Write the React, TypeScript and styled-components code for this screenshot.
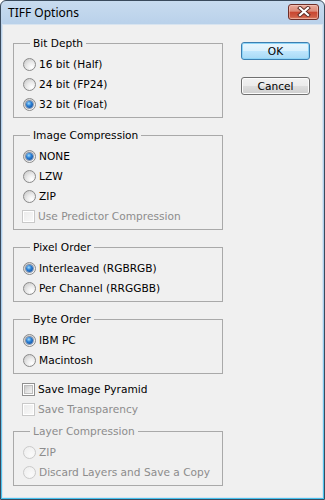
import styled, { createGlobalStyle } from "styled-components";

const Global = createGlobalStyle`
  html, body { margin: 0; padding: 0; background: #ffffff; }
  body { width: 325px; height: 500px; overflow: hidden; }
`;

const Window = styled.div`
    box-sizing: border-box;
    width: 325px;
    height: 500px;
    border: 1px solid #3a4a5c;
    border-radius: 6px 6px 0 0;
    background: linear-gradient(to bottom, #c8dbef 0px, #b9d1ea 24px, #a9cdec 60%, #46c2ee 100%);
    display: flex;
    flex-direction: column;
    font-family: "DejaVu Sans", Verdana, sans-serif;
    font-size: 10.6px;
    color: #000;
`;

const TitleBar = styled.div`
    height: 24px;
    display: flex;
    align-items: center;
    justify-content: space-between;
    padding: 0 5px 0 7px;
    flex-shrink: 0;
`;

const Title = styled.span`
    font-family: "Noto Sans", "Open Sans", sans-serif;
    font-size: 12px;
    color: #000;
    margin-top: -1px;
`;

const CloseButton = styled.div`
    width: 31px;
    height: 16px;
    box-sizing: border-box;
    margin-top: -3px;
    border: 1px solid #6e2e28;
    border-radius: 3px;
    background: linear-gradient(to bottom, #e9a99b 0%, #dc8a78 45%, #c9452f 50%, #cf5d45 85%, #e08a6f 100%);
    box-shadow: inset 0 0 0 1px rgba(255, 220, 210, 0.45);
    display: flex;
    align-items: center;
    justify-content: center;
`;

const Client = styled.div`
    flex: 1;
    margin: 0 2px 2px 2px;
    background: #f0f0f0;
    display: flex;
    padding: 11px 0 0 10px;
    box-shadow: 0 0 0 1px #d8e4f0;
`;

const Main = styled.div`
    width: 210px;
    display: flex;
    flex-direction: column;
`;

const Side = styled.div`
    display: flex;
    flex-direction: column;
    gap: 17px;
    margin: 6px 0 0 18px;
`;

const Button = styled.button<{ $default?: boolean }>`
    width: 69px;
    height: 18px;
    padding: 0;
    border-radius: 3px;
    font-family: "DejaVu Sans", Verdana, sans-serif;
    font-size: 10.6px;
    color: #000;
    border: 1px solid ${(p) => (p.$default ? "#3c7fb1" : "#707070")};
    background: ${(p) =>
        p.$default
            ? "linear-gradient(to bottom, #eaf6fd 0%, #d9f0fc 50%, #bee6fd 51%, #a7d9f5 100%)"
            : "linear-gradient(to bottom, #f2f2f2 0%, #ebebeb 50%, #dddddd 51%, #cfcfcf 100%)"};
    box-shadow: inset 0 0 0 1px ${(p) => (p.$default ? "#8ed5f7" : "#fcfcfc")};
`;

const Group = styled.fieldset<{ $disabled?: boolean }>`
    margin: 0 0 10px 0;
    padding: 0 9px 3px 9px;
    border: 1px solid #a9a9a9;
    border-radius: 0;
    min-width: 0;
    color: ${(p) => (p.$disabled ? "#8c8c8c" : "#000")};
`;

const Legend = styled.legend`
    margin-left: 7px;
    padding: 0 3px;
    line-height: 15px;
`;

const List = styled.div`
    display: flex;
    flex-direction: column;
    padding-top: 3px;
`;

const Row = styled.label<{ $disabled?: boolean; $indent?: number }>`
    height: 20px;
    display: flex;
    align-items: center;
    gap: 3px;
    margin-left: ${(p) => p.$indent ?? 0}px;
    color: ${(p) => (p.$disabled ? "#8c8c8c" : "#000")};
    white-space: nowrap;
`;

const Radio = styled.span<{ $checked?: boolean; $disabled?: boolean }>`
    width: 13px;
    height: 13px;
    box-sizing: border-box;
    border-radius: 50%;
    flex-shrink: 0;
    border: 1px solid ${(p) => (p.$disabled ? "#cacaca" : "#8a8a8a")};
    background: ${(p) =>
        p.$disabled
            ? "radial-gradient(circle at 65% 70%, #fafafa 0%, #ededed 100%)"
            : "radial-gradient(circle at 70% 75%, #ffffff 0%, #ececec 40%, #c2c2c2 100%)"};
    display: flex;
    align-items: center;
    justify-content: center;
    &::after {
        content: "";
        display: ${(p) => (p.$checked ? "block" : "none")};
        width: 7px;
        height: 7px;
        border-radius: 50%;
        background: radial-gradient(circle at 40% 35%, #9fdcff 0%, #2a7fd4 40%, #0b3f8c 100%);
        box-shadow: 0 0 0 1px rgba(20, 50, 100, 0.45);
    }
`;

const Check = styled.span<{ $disabled?: boolean }>`
    width: 13px;
    height: 13px;
    box-sizing: border-box;
    flex-shrink: 0;
    border: 1px solid ${(p) => (p.$disabled ? "#c9c9c9" : "#8f8f8f")};
    background: #fff;
    padding: 1px;
    &::after {
        content: "";
        display: block;
        width: 100%;
        height: 100%;
        background: ${(p) =>
            p.$disabled
                ? "linear-gradient(135deg, #ececec 0%, #f8f8f8 100%)"
                : "linear-gradient(135deg, #c9c9c9 0%, #e6e6e6 60%, #f2f2f2 100%)"};
        box-sizing: border-box;
        border: ${(p) => (p.$disabled ? "0" : "1px solid #bdbdbd")};
    }
`;

const Checks = styled.div`
    display: flex;
    flex-direction: column;
    margin: -5px 0 5px 0;
`;

type Opt = { label: string; checked?: boolean; disabled?: boolean; box?: boolean };

function OptionGroup({ title, options, disabled }: { title: string; options: Opt[]; disabled?: boolean }) {
    return (
        <Group $disabled={disabled}>
            <Legend>{title}</Legend>
            <List>
                {options.map((o) =>
                    o.box ? (
                        <Row key={o.label} $disabled={o.disabled} $indent={-1}>
                            <Check $disabled={o.disabled} />
                            {o.label}
                        </Row>
                    ) : (
                        <Row key={o.label} $disabled={o.disabled}>
                            <Radio $checked={o.checked} $disabled={o.disabled} />
                            {o.label}
                        </Row>
                    )
                )}
            </List>
        </Group>
    );
}

export default function App() {
    return (
        <>
            <Global />
            <Window>
                <TitleBar>
                    <Title>TIFF Options</Title>
                    <CloseButton>
                        <svg width="14" height="11" viewBox="0 0 14 11">
                            <path d="M3 2 L11 9 M11 2 L3 9" stroke="#5a2a24" strokeWidth="4" strokeLinecap="square" />
                            <path d="M3 2 L11 9 M11 2 L3 9" stroke="#ffffff" strokeWidth="2.2" strokeLinecap="square" />
                        </svg>
                    </CloseButton>
                </TitleBar>
                <Client>
                    <Main>
                        <OptionGroup
                            title="Bit Depth"
                            options={[
                                { label: "16 bit (Half)" },
                                { label: "24 bit (FP24)" },
                                { label: "32 bit (Float)", checked: true },
                            ]}
                        />
                        <OptionGroup
                            title="Image Compression"
                            options={[
                                { label: "NONE", checked: true },
                                { label: "LZW" },
                                { label: "ZIP" },
                                { label: "Use Predictor Compression", disabled: true, box: true },
                            ]}
                        />
                        <OptionGroup
                            title="Pixel Order"
                            options={[
                                { label: "Interleaved (RGBRGB)", checked: true },
                                { label: "Per Channel (RRGGBB)" },
                            ]}
                        />
                        <OptionGroup
                            title="Byte Order"
                            options={[{ label: "IBM PC", checked: true }, { label: "Macintosh" }]}
                        />
                        <Checks>
                            <Row $indent={9}>
                                <Check />
                                Save Image Pyramid
                            </Row>
                            <Row $indent={9} $disabled>
                                <Check $disabled />
                                Save Transparency
                            </Row>
                        </Checks>
                        <OptionGroup
                            title="Layer Compression"
                            disabled
                            options={[
                                { label: "ZIP", disabled: true },
                                { label: "Discard Layers and Save a Copy", disabled: true },
                            ]}
                        />
                    </Main>
                    <Side>
                        <Button $default>OK</Button>
                        <Button>Cancel</Button>
                    </Side>
                </Client>
            </Window>
        </>
    );
}
